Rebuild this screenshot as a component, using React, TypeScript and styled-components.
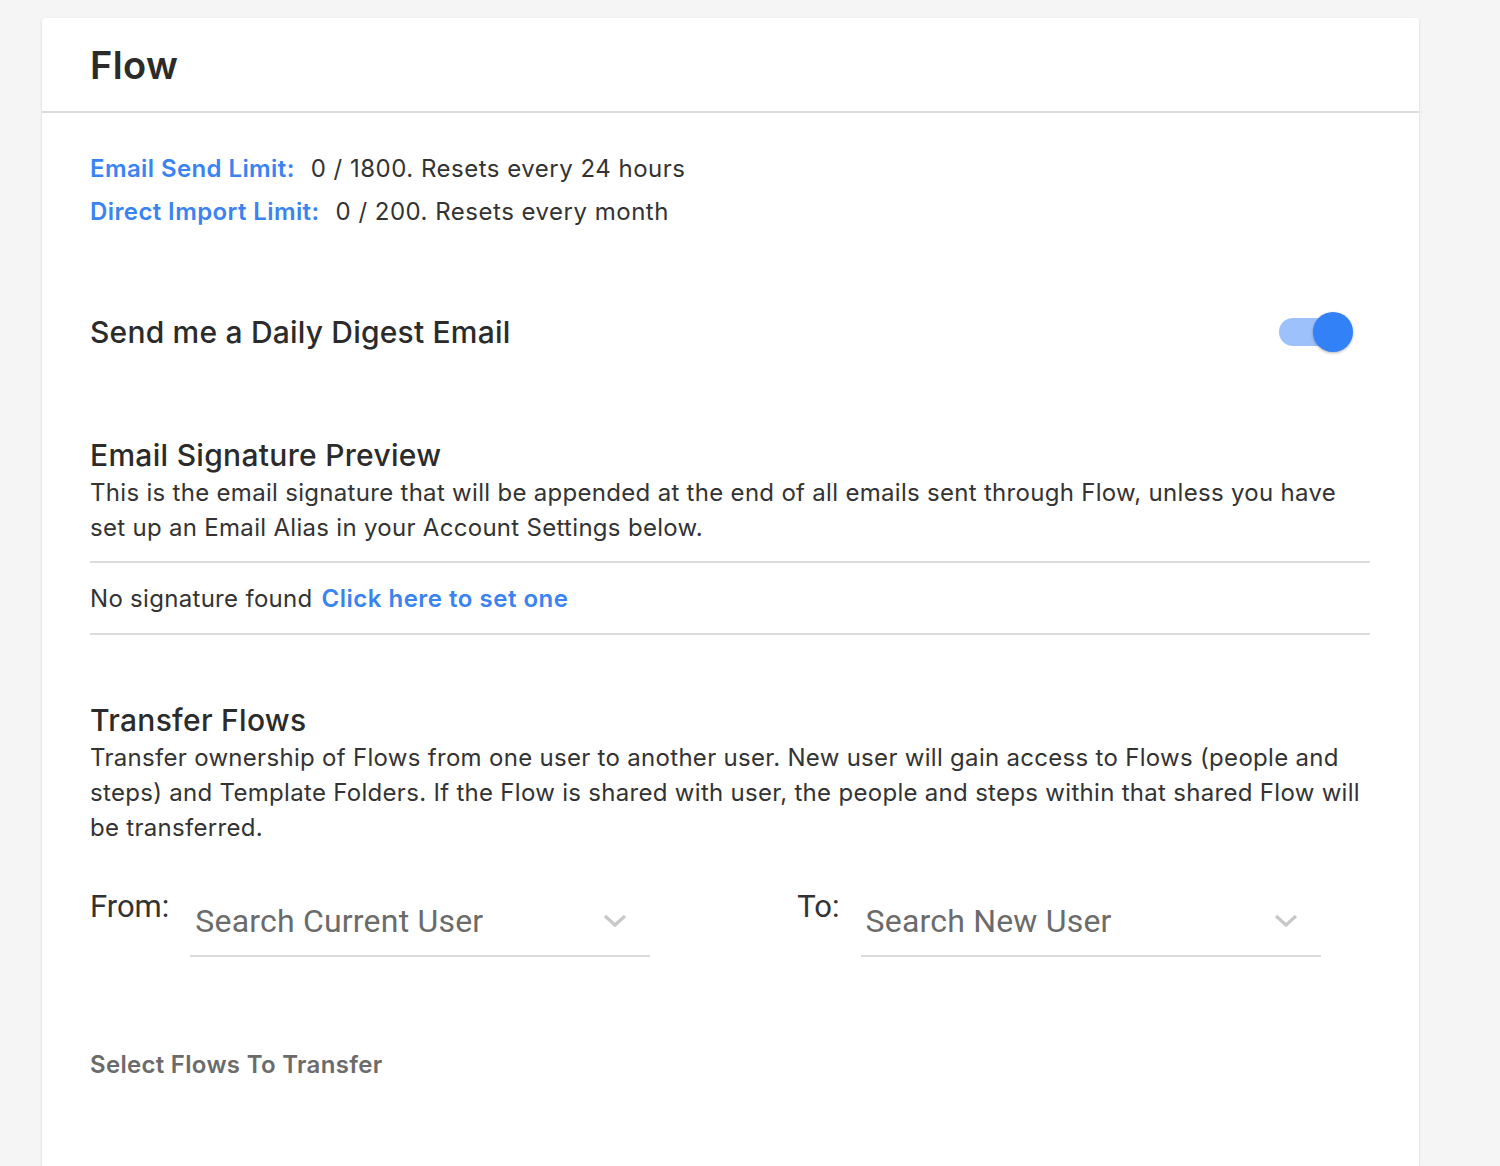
import styled, { createGlobalStyle } from 'styled-components';

const GlobalStyle = createGlobalStyle`
  html, body {
    margin: 0;
    padding: 0;
    background: #f5f5f5;
  }
  body {
    font-family: Inter, "Noto Sans", sans-serif;
    color: #333;
  }
`;

type SelectProps = {
  label: string
  placeholder: string
}

const UserSelect: React.FC<SelectProps> = ({ label, placeholder }) => (
  <SelectGroup>
    <SelectLabel>{label}</SelectLabel>
    <SelectField>
      <Placeholder>{placeholder}</Placeholder>
      <svg width="26" height="16" viewBox="0 0 26 16">
        <path d="M3 3 L13 12 L23 3" fill="none" stroke="#c8c8c8" strokeWidth="3.2" />
      </svg>
    </SelectField>
  </SelectGroup>
);

const App = () => {
  return (
    <>
      <GlobalStyle />
      <Page>
        <Card>
          <Header>
            <Title>Flow</Title>
          </Header>
          <Body>
            <Limits>
              <LimitRow>
                <LimitLabel>Email Send Limit:</LimitLabel>
                <span>0 / 1800. Resets every 24 hours</span>
              </LimitRow>
              <LimitRow>
                <LimitLabel>Direct Import Limit:</LimitLabel>
                <span>0 / 200. Resets every month</span>
              </LimitRow>
            </Limits>

            <DigestRow>
              <DigestTitle>Send me a Daily Digest Email</DigestTitle>
              <Switch>
                <Knob />
              </Switch>
            </DigestRow>

            <Section>
              <SectionTitle>Email Signature Preview</SectionTitle>
              <Description>
                This is the email signature that will be appended at the end of all emails sent through Flow, unless you have set up an Email Alias in your Account Settings below.
              </Description>
              <SignatureBox>
                No signature found <SetLink href="#">Click here to set one</SetLink>
              </SignatureBox>
            </Section>

            <TransferSection>
              <SectionTitle>Transfer Flows</SectionTitle>
              <Description>
                Transfer ownership of Flows from one user to another user. New user will gain access to Flows (people and steps) and Template Folders. If the Flow is shared with user, the people and steps within that shared Flow will be transferred.
              </Description>
              <SelectRow>
                <UserSelect label="From:" placeholder="Search Current User" />
                <UserSelect label="To:" placeholder="Search New User" />
              </SelectRow>
              <SubHeading>Select Flows To Transfer</SubHeading>
            </TransferSection>
          </Body>
        </Card>
      </Page>
    </>
  )
}

const Page = styled.div`
  padding: 18px 81px 0 42px;
  min-height: 1166px;
  box-sizing: border-box;
`;

const Card = styled.div`
  background: #fff;
  border-radius: 4px 4px 0 0;
  box-shadow: 0 1px 3px rgba(0, 0, 0, 0.12);
  min-height: 1148px;
`;

const Header = styled.div`
  height: 95px;
  box-sizing: border-box;
  border-bottom: 2px solid #dcdcdc;
  padding: 0 48px;
  display: flex;
  align-items: center;
`;

const Title = styled.h1`
  margin: 0;
  font-size: 38px;
  font-weight: 600;
  letter-spacing: 0.4px;
  color: #2b2b2b;
`;

const Body = styled.div`
  padding: 39px 49px 0 48px;
  letter-spacing: 0.3px;
`;

const Limits = styled.div`
  display: flex;
  flex-direction: column;
  gap: 9px;
  font-size: 24px;
`;

const LimitRow = styled.div`
  display: flex;
  gap: 16px;
  line-height: 34px;
  letter-spacing: 0.5px;
`;

const LimitLabel = styled.span`
  color: #3a83f1;
  font-weight: 600;
  letter-spacing: 0.4px;
`;

const DigestRow = styled.div`
  display: flex;
  align-items: center;
  justify-content: space-between;
  margin-top: 85px;
  padding-right: 25px;
`;

const DigestTitle = styled.h2`
  margin: 0;
  font-size: 30px;
  font-weight: 500;
  letter-spacing: 0.2px;
  color: #2b2b2b;
`;

const Switch = styled.div`
  position: relative;
  width: 66px;
  height: 28px;
  border-radius: 14px;
  background: #9dc1fa;
`;

const Knob = styled.div`
  position: absolute;
  right: -8px;
  top: -6px;
  width: 40px;
  height: 40px;
  border-radius: 50%;
  background: #3381f6;
  box-shadow: 0 1px 3px rgba(0, 0, 0, 0.3);
`;

const Section = styled.section`
  margin-top: 85px;
`;

const SectionTitle = styled.h3`
  margin: 0;
  font-size: 30px;
  font-weight: 500;
  line-height: 40px;
  letter-spacing: 0.3px;
  color: #2b2b2b;
`;

const Description = styled.p`
  margin: 0;
  font-size: 24px;
  line-height: 35px;
  color: #333;
`;

const SignatureBox = styled.div`
  margin-top: 16px;
  border-top: 2px solid #dcdcdc;
  border-bottom: 2px solid #dcdcdc;
  height: 74px;
  box-sizing: border-box;
  display: flex;
  align-items: center;
  font-size: 24px;
  gap: 9px;
`;

const SetLink = styled.a`
  color: #3a83f1;
  font-weight: 600;
  letter-spacing: 0.5px;
  text-decoration: none;
`;

const TransferSection = styled.section`
  margin-top: 65px;
`;

const SelectRow = styled.div`
  display: flex;
  gap: 147px;
  margin-top: 42px;
`;

const SelectGroup = styled.div`
  display: flex;
  align-items: flex-start;
  gap: 21px;
`;

const SelectLabel = styled.span`
  font-family: Roboto, sans-serif;
  font-size: 31px;
  color: #333;
  line-height: 40px;
  letter-spacing: 0;
`;

const SelectField = styled.div`
  width: 460px;
  height: 70px;
  box-sizing: border-box;
  border-bottom: 2px solid #dcdcdc;
  display: flex;
  align-items: center;
  justify-content: space-between;
  padding: 0 22px 0 5px;
`;

const Placeholder = styled.span`
  font-family: Roboto, sans-serif;
  font-size: 32px;
  letter-spacing: 0.2px;
  color: #6b6b6b;
`;

const SubHeading = styled.h4`
  margin: 93px 0 0;
  font-size: 24px;
  font-weight: 600;
  color: #6b6b6b;
`;

export default App;
